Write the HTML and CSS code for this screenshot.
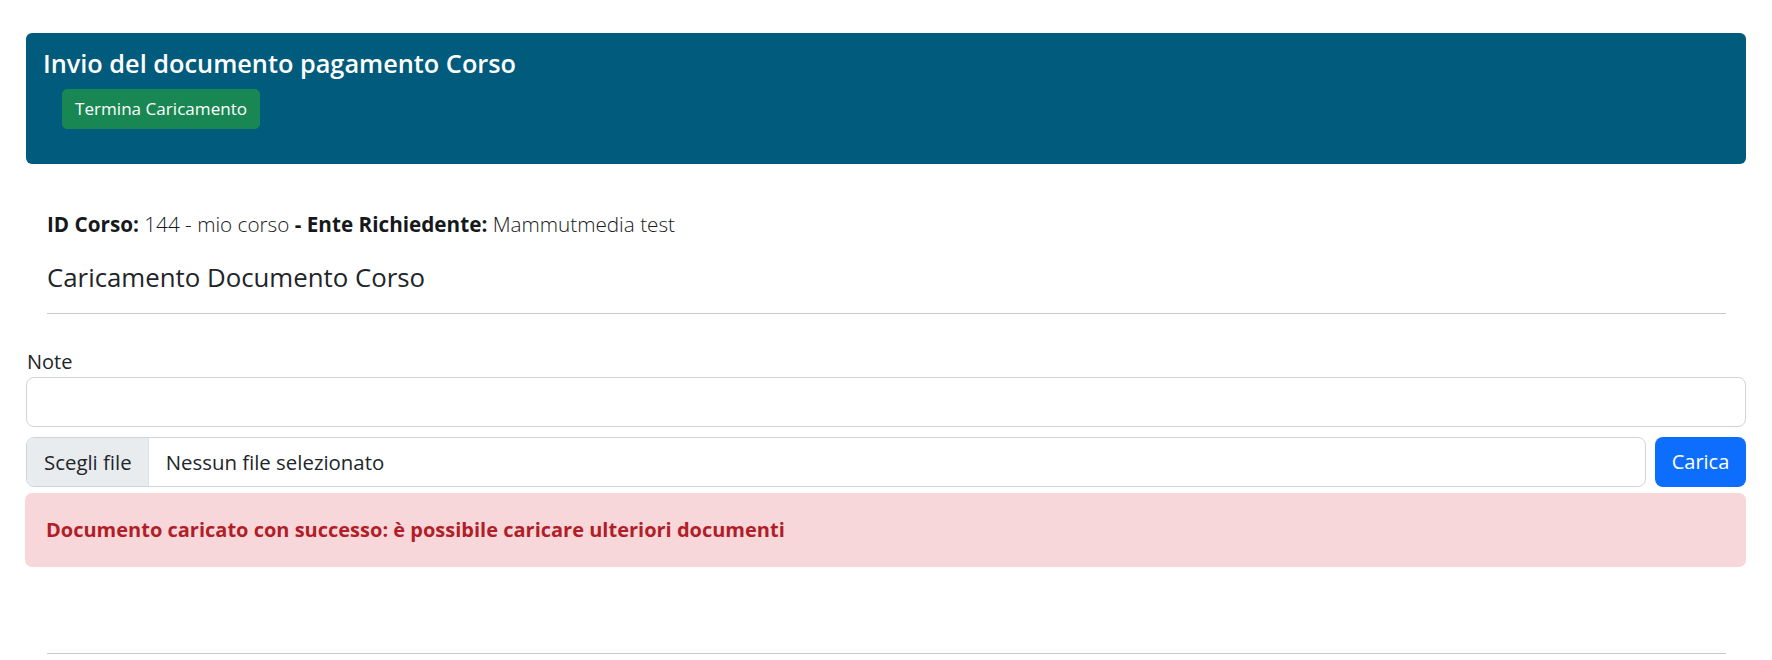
FILE: index.html
```html
<!DOCTYPE html>
<html lang="it">
<head>
<meta charset="utf-8">
<title>Invio del documento pagamento Corso</title>
<link rel="stylesheet" href="styles.css">
</head>
<body>
<div class="page">
  <header class="hero">
    <h4 class="hero-title">Invio del documento pagamento Corso</h4>
    <a class="btn btn-success">Termina Caricamento</a>
  </header>

  <section class="info">
    <p class="lead"><b>ID Corso:</b> 144 - mio corso <b>- Ente Richiedente:</b> Mammutmedia test</p>
    <h3 class="section-title">Caricamento Documento Corso</h3>
    <hr class="rule">
  </section>

  <form class="upload">
    <label class="field-label">Note</label>
    <div class="form-control"></div>
    <div class="file-row">
      <div class="file-input">
        <span class="file-btn">Scegli file</span>
        <span class="file-name">Nessun file selezionato</span>
      </div>
      <span class="btn-primary">Carica</span>
    </div>
    <div class="alert">Documento caricato con successo: è possibile caricare ulteriori documenti</div>
  </form>

  <section class="info">
    <hr class="rule rule-bottom">
  </section>
</div>
</body>
</html>
```

FILE: styles.css
```css
* { box-sizing: border-box; }

html, body {
  margin: 0;
  padding: 0;
  background: #ffffff;
  color: #212529;
  font-family: "Open Sans", "Noto Sans", "Liberation Sans", sans-serif;
}

.page {
  padding: 33px 26px 0 26px;
}

.hero {
  background: #005b7c;
  border-radius: 6px;
  padding: 15px 17px 35px 17px;
  color: #ffffff;
}

.hero-title {
  margin: 0 0 11px 0;
  font-size: 25.3px;
  font-weight: 600;
  line-height: 1.2;
}

.btn {
  display: inline-block;
  margin-left: 19px;
  padding: 6px 12px;
  border: 1px solid transparent;
  border-radius: 5px;
  font-size: 17.1px;
  line-height: 26px;
  text-decoration: none;
}

.btn-success {
  background: #198754;
  border-color: #198754;
  color: #ffffff;
}

.info {
  padding: 0 20px 0 21px;
}

.lead {
  margin: 45px 0 0 0;
  font-size: 20.7px;
  font-weight: 300;
  line-height: 30px;
  color: #16191c;
}

.lead b {
  font-weight: 700;
}

.section-title {
  margin: 23px 0 0 0;
  font-size: 25.8px;
  font-weight: 400;
  line-height: 1.2;
}

.rule {
  margin: 20px 0 0 0;
  border: 0;
  border-top: 1px solid #c8c9ca;
  height: 0;
}

.rule-bottom {
  margin-top: 86px;
}

.upload {
  margin: 33px 0 0 0;
  display: flex;
  flex-direction: column;
}

.field-label {
  display: block;
  padding-left: 1px;
  font-size: 20px;
  line-height: 1.5;
}

.form-control {
  height: 50px;
  border: 1px solid #ced4da;
  border-radius: 8px;
  background: #ffffff;
}

.file-row {
  display: flex;
  gap: 9px;
  margin-top: 10px;
}

.file-input {
  flex: 1;
  display: flex;
  height: 50px;
  border: 1px solid #ced4da;
  border-radius: 8px;
  overflow: hidden;
  font-size: 20.4px;
  line-height: 30px;
}

.file-btn {
  display: flex;
  align-items: center;
  padding: 0 16px 0 17px;
  background: #e9ecef;
  border-right: 1px solid #dee2e6;
  color: #212529;
}

.file-name {
  display: flex;
  align-items: center;
  padding-left: 17px;
  color: #212529;
}

.btn-primary {
  display: flex;
  align-items: center;
  justify-content: center;
  width: 91px;
  height: 50px;
  background: #0d6efd;
  border-radius: 8px;
  color: #ffffff;
  font-size: 20px;
  line-height: 30px;
}

.alert {
  margin: 6px 0 0 -1px;
  padding: 22px 20px 22px 21px;
  background: #f8d7da;
  border-radius: 7px;
  color: #b11e28;
  font-size: 20px;
  font-weight: 700;
  line-height: 30px;
}
```
